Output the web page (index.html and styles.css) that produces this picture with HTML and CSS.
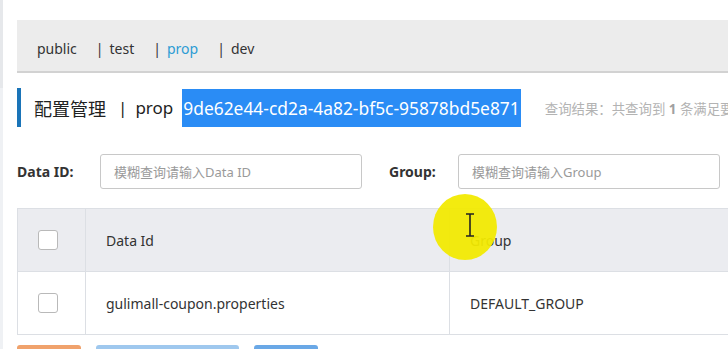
FILE: index.html
```html
<!DOCTYPE html>
<html lang="zh-CN">
<head>
    <meta charset="UTF-8">
    <title>配置管理</title>
    <link rel="stylesheet" href="styles.css">
</head>
<body>
    <div class="layout">
        <div class="sidebar-edge"></div>

        <div class="main">
            <!-- Namespaces -->
            <div class="ns-bar">
                <span class="ns">public</span>
                <span class="ns"><span class="sep">|</span>test</span>
                <span class="ns active"><span class="sep">|</span>prop</span>
                <span class="ns"><span class="sep">|</span>dev</span>
            </div>

            <!-- Title -->
            <div class="title-row">
                <span class="title">配置管理</span>
                <span class="title-sep">|</span>
                <span class="title-ns">prop</span>
                <span class="ns-id">9de62e44-cd2a-4a82-bf5c-95878bd5e871</span>
                <span class="result">查询结果：共查询到 <b>1</b> 条满足要求的配置。</span>
            </div>

            <!-- Filters -->
            <div class="filters">
                <label class="filter-label">Data ID:</label>
                <div class="input">模糊查询请输入Data ID</div>
                <label class="filter-label group-label">Group:</label>
                <div class="input">模糊查询请输入Group</div>
            </div>

            <!-- Table -->
            <div class="table">
                <div class="row head">
                    <div class="cell check"><span class="box"></span></div>
                    <div class="cell col-id">Data Id</div>
                    <div class="cell col-group">Group</div>
                </div>
                <div class="row">
                    <div class="cell check"><span class="box"></span></div>
                    <div class="cell col-id">gulimall-coupon.properties</div>
                    <div class="cell col-group">DEFAULT_GROUP</div>
                </div>
            </div>

            <div class="actions">
                <span class="btn orange"></span>
                <span class="btn light"></span>
                <span class="btn blue"></span>
            </div>
        </div>
    </div>

    <!-- curseur de la vidéo -->
    <div class="cursor-spot">
        <svg width="10" height="24" viewBox="0 0 10 24">
            <path d="M1 1 H9 M5 1 V23 M1 23 H9" stroke="#222" stroke-width="1.6" fill="none"/>
        </svg>
    </div>
</body>
</html>
```

FILE: styles.css
```css
body {
    margin: 0;
    font-family: "Noto Sans", "Noto Sans CJK SC", sans-serif;
    background-color: #ffffff;
    color: #333333;
    overflow: hidden;
}
.layout {
    display: flex;
    height: 349px;
}
.sidebar-edge {
    width: 3px;
    flex-shrink: 0;
    background: linear-gradient(#e6e8eb 0, #e6e8eb 88px, #eff1f4 88px);
}
.main {
    margin-left: 14px;
    width: 900px;
    flex-shrink: 0;
}
.ns-bar {
    margin-top: 20px;
    height: 53px;
    box-sizing: border-box;
    padding-top: 6px;
    background-color: #ececec;
    border-bottom: 2px solid #d2d2d2;
    display: flex;
    align-items: center;
    padding-left: 20px;
    font-size: 14px;
}
.ns {
    margin-right: 19px;
    color: #333333;
}
.ns .sep {
    margin-right: 6px;
}
.ns.active {
    color: #2d9cd4;
}
.ns.active .sep {
    color: #333333;
}
.title-row {
    margin-top: 15px;
    height: 39px;
    border-left: 4px solid #1a74b8;
    display: flex;
    align-items: center;
    padding-left: 13px;
    font-size: 17px;
    color: #222222;
}
.title {
    font-size: 18px;
}
.title-sep {
    margin: 0 8px 0 12px;
}
.ns-id {
    margin-left: 9px;
    background-color: #2a8cf5;
    color: #ffffff;
    font-size: 17.4px;
    line-height: 38px;
    padding: 0 1px;
}
.result {
    margin-left: 24px;
    font-size: 13.4px;
    color: #b3b3b3;
    white-space: nowrap;
}
.result b {
    color: #a0a0a0;
}
.filters {
    margin-top: 27px;
    display: flex;
    align-items: center;
}
.filter-label {
    font-size: 14px;
    font-weight: bold;
    color: #333333;
    width: 83px;
}
.group-label {
    margin-left: 27px;
    width: 69px;
}
.input {
    width: 247px;
    height: 33px;
    border: 1px solid #c8c8c8;
    border-radius: 3px;
    padding-left: 13px;
    font-size: 13px;
    color: #9a9a9a;
    display: flex;
    align-items: center;
}
.table {
    margin-top: 19px;
    border-left: 1px solid #dcdfe4;
}
.row {
    display: flex;
    height: 62px;
    border-bottom: 1px solid #dcdfe4;
    font-size: 14px;
}
.row.head {
    background-color: #ebecf0;
    border-top: 1px solid #dcdfe4;
}
.cell {
    display: flex;
    align-items: center;
    border-right: 1px solid #dcdfe4;
    padding-left: 20px;
}
.cell.check {
    width: 47px;
    padding-left: 20px;
}
.col-id {
    width: 343px;
}
.col-group {
    flex: 1;
    border-right: none;
}
.box {
    width: 18px;
    height: 18px;
    border: 1px solid #b9b9b9;
    border-radius: 3px;
    background-color: #ffffff;
}
.actions {
    margin-top: 10px;
    display: flex;
    gap: 15px;
}
.btn {
    height: 30px;
    border-radius: 3px;
}
.btn.orange {
    width: 64px;
    background-color: #f0a26c;
}
.btn.light {
    width: 143px;
    background-color: #9fc8ee;
}
.btn.blue {
    width: 64px;
    background-color: #6aa8e6;
}
.cursor-spot {
    position: absolute;
    left: 433px;
    top: 194px;
    width: 64px;
    height: 66px;
    border-radius: 50%;
    background-color: rgba(242, 234, 0, 0.94);
}
.cursor-spot svg {
    position: absolute;
    left: 32px;
    top: 19px;
}
```
